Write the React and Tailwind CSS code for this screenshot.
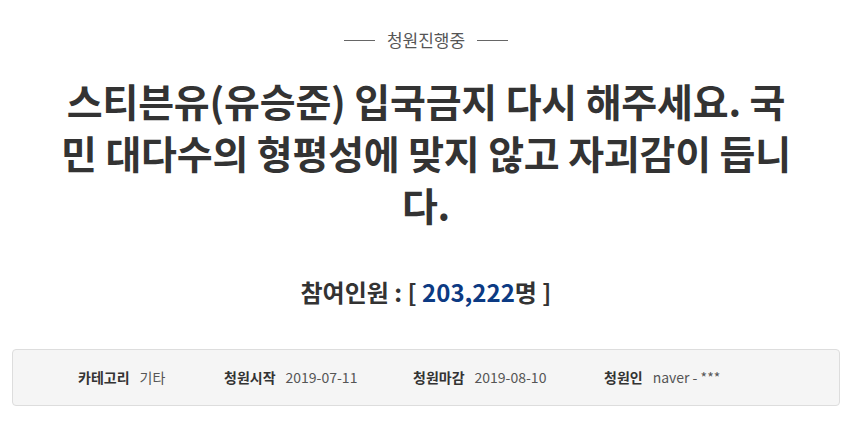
import React from 'react';

const info = [
  { label: '카테고리', value: '기타', w: 'w-[146px]' },
  { label: '청원시작', value: '2019-07-11', w: 'w-[189px]' },
  { label: '청원마감', value: '2019-08-10', w: 'w-[191px]' },
  { label: '청원인', value: 'naver - ***', w: '' },
];

export default function App() {
  return (
    <div className="w-[852px] h-[427px] bg-white text-[#333]" style={{ fontFamily: '"Noto Sans CJK KR", "Noto Sans", sans-serif' }}>
      <div className="pt-[27px] flex items-center justify-center gap-3">
        <span className="w-[31px] h-px bg-[#666]"></span>
        <span className="text-[17px] text-[#555] leading-[26px]">청원진행중</span>
        <span className="w-[31px] h-px bg-[#666]"></span>
      </div>
      <h1 className="mx-auto mt-[21px] w-[740px] text-center text-[39px] font-bold leading-[52px] tracking-[-0.2px] text-[#333] break-all">
        스티븐유(유승준) 입국금지 다시 해주세요. 국민 대다수의 형평성에 맞지 않고 자괴감이 듭니다.
      </h1>
      <div className="mt-[44px] text-center text-[24px] font-bold leading-[36px] text-[#333]">
        참여인원 : [ <span className="text-[#0c3a83]">203,222</span>명 ]
      </div>
      <div className="mx-[12px] mt-[39px] h-[57px] rounded-[4px] border border-[#ddd] bg-[#f5f5f5] flex items-center pl-[65px] text-[14px]">
        {info.map((it) => (
          <div key={it.label} className={`flex items-center shrink-0 ${it.w}`}>
            <span className="font-bold text-[#333]">{it.label}</span>
            <span className="ml-[10px] text-[#555]">{it.value}</span>
          </div>
        ))}
      </div>
    </div>
  );
}
